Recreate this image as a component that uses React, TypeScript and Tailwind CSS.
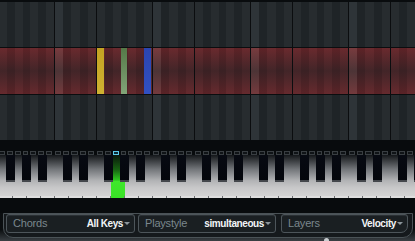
import React from 'react';

type Kind = 'c' | 'w' | 'b';

const LOW: Kind[] = ['c', 'b', 'w', 'b', 'w'];
const HIGH: Kind[] = ['w', 'b', 'w', 'b', 'w', 'b', 'w'];
const OCTAVES = [0, 1, 2, 3, 4];
const WHITE = ['C', 'D', 'E', 'F', 'G', 'A', 'B'];
const BLACK_POS = ['left-[8px]', 'left-[24px]', 'left-[49px]', 'left-[65px]', 'left-[81px]'];

const rowShade: Record<Kind, string> = {
  c: 'bg-[#2e3438]',
  w: 'bg-[#272c2f]',
  b: 'bg-[#1f2427]',
};

const redShade: Record<Kind, string> = {
  c: 'bg-[linear-gradient(to_bottom,#783b3e,#4c3436_50%,#743a3d)]',
  w: 'bg-[linear-gradient(to_bottom,#6a2a2e,#422528_50%,#662a2e)]',
  b: 'bg-[linear-gradient(to_bottom,#5e2327,#3a2124_50%,#5a2327)]',
};

// chord notes shown in the pad row (octave-group-index)
const bars: Record<string, string> = {
  '1-h-0': 'bg-[linear-gradient(to_bottom,#c4a322,#cfb232)]',
  '1-h-3': 'bg-[linear-gradient(to_bottom,#557948,#82a578)]',
  '1-h-6': 'bg-[linear-gradient(to_bottom,#2b45b0,#3150c2)]',
};

function Column({ kind, bar }: { kind: Kind; bar?: string }) {
  return (
    <div className="flex-1 flex flex-col">
      <div className={`h-[45px] ${rowShade[kind]}`} />
      <div className="h-px bg-[#0b0d0f]" />
      <div className={`h-[46px] flex ${redShade[kind]}`}>
        {bar && <div className={`flex-1 mr-px ${bar}`} />}
      </div>
      <div className="h-px bg-[#0b0d0f]" />
      <div className={`h-[45px] ${rowShade[kind]}`} />
    </div>
  );
}

function Indicator({ active }: { active?: boolean }) {
  return (
    <div className="flex-1 flex">
      <div
        className={`flex-1 mr-[2px] h-[4px] border ${
          active ? 'border-[#5ccbe9] bg-[#0e2a33]' : 'border-[#393e42] bg-[#101417]'
        }`}
      />
    </div>
  );
}

function WhiteKey({ green }: { green?: boolean }) {
  return (
    <div className="w-[14px] h-full flex flex-col">
      <div
        className={`flex-1 ${
          green
            ? 'bg-[linear-gradient(to_bottom,#0a160b_0%,#176012_35%,#2ecd1f_62%,#3fe82b_63%,#3ae227_100%)]'
            : 'bg-[linear-gradient(to_bottom,#14171a_0%,#73767a_35%,#b3b4b6_63%,#c8c8c9_80%,#d3d3d3_100%)]'
        }`}
      />
      <div className="h-[2px] flex">
        <div className={`flex-1 ${green ? 'bg-[#3ae227]' : 'bg-[#dedede]'}`} />
        <div className="w-px bg-[#6b6d70]" />
      </div>
    </div>
  );
}

function Field({
  label,
  value,
  className,
}: {
  label: string;
  value: string;
  className: string;
}) {
  return (
    <div
      className={`h-[19px] flex items-center justify-between pl-[6px] pr-[4px] border border-[#4d555a] bg-[#1a1f22] shadow-[inset_0_1px_0_#2a3034] ${className}`}
    >
      <span className="text-[11px] tracking-[-0.2px] text-[#7b878d] leading-none">{label}</span>
      <span className="flex items-center">
        <span className="text-[10px] font-bold tracking-[-0.4px] text-[#f2f5f7] leading-none">{value}</span>
        <span className="ml-[1px] w-0 h-0 border-l-[3px] border-r-[3px] border-t-[3px] border-l-transparent border-r-transparent border-t-[#8c969b]" />
      </span>
    </div>
  );
}

export default function App() {
  return (
    <div className="w-[415px] h-[241px] overflow-hidden bg-[#080b0d] font-['Liberation_Sans',Arial,sans-serif] flex flex-col">
      {/* Top edge */}
      <div className="h-[2px] bg-[#090c0e] shrink-0" />

      {/* Pad grid */}
      <div className="flex h-[138px] -ml-[44px] w-max shrink-0">
        {OCTAVES.map((o) => (
          <div key={o} className="flex">
            <div className="w-[42px] flex border-l border-[#0b0d0f]">
              {LOW.map((k, i) => (
                <Column key={i} kind={k} bar={bars[`${o}-l-${i}`]} />
              ))}
            </div>
            <div className="w-[56px] flex border-l border-[#0b0d0f]">
              {HIGH.map((k, i) => (
                <Column key={i} kind={k} bar={bars[`${o}-h-${i}`]} />
              ))}
            </div>
          </div>
        ))}
      </div>

      {/* Dark gap */}
      <div className="h-[11px] shrink-0 bg-[#080b0d]" />

      {/* Note indicators */}
      <div className="flex h-[4px] -ml-[44px] w-max shrink-0">
        {OCTAVES.map((o) => (
          <div key={o} className="flex">
            <div className="w-[42px] flex border-l border-transparent">
              {LOW.map((_, i) => (
                <Indicator key={i} />
              ))}
            </div>
            <div className="w-[56px] flex border-l border-transparent">
              {HIGH.map((_, i) => (
                <Indicator key={i} active={o === 1 && i === 2} />
              ))}
            </div>
          </div>
        ))}
      </div>

      {/* Keyboard */}
      <div className="flex h-[43px] -ml-[43px] w-max shrink-0">
        {OCTAVES.map((o) => (
          <div key={o} className="relative flex h-full">
            {WHITE.map((n) => (
              <WhiteKey key={n} green={o === 1 && n === 'G'} />
            ))}
            {BLACK_POS.map((pos) => (
              <div
                key={pos}
                className={`absolute top-0 ${pos} w-[9px] h-[27px] flex flex-col bg-[linear-gradient(to_bottom,#070a12,#04060b)]`}
              >
                <div className="flex-1" />
                <div className="h-[2px] bg-[#44474c]" />
              </div>
            ))}
          </div>
        ))}
      </div>

      {/* Dark gap */}
      <div className="h-[15px] shrink-0 bg-[#080b0d]" />

      {/* Bottom controls */}
      <div className="relative flex-1 bg-[linear-gradient(to_bottom,#0b0e10_60%,#3a4044)]">
        <div className="ml-[3px] w-[410px] h-[25px] rounded-b-[10px] border-l border-r border-b border-t border-[#4a5256] bg-[#15191c] flex pl-[2px] pr-[3px] gap-[3px]">
          <Field label="Chords" value="All Keys" className="w-[129px] rounded-[3px]" />
          <Field label="Playstyle" value="simultaneous" className="w-[138px] rounded-[3px] mr-[2px]" />
          <Field label="Layers" value="Velocity" className="w-[127px] rounded-[3px] rounded-br-[7px]" />
        </div>
        <div className="absolute bottom-0 left-[324px] w-[5px] h-[3px] rounded-t-full bg-[#c9cdd0]" />
      </div>
    </div>
  );
}
